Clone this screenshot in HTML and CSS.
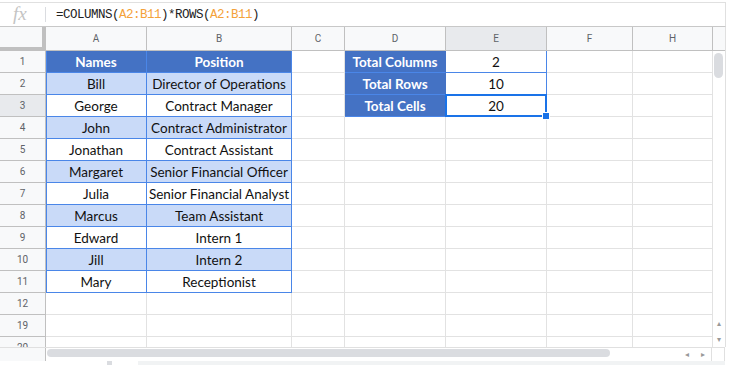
FILE: index.html
```html
<!DOCTYPE html>
<html lang="en">

<head>
    <meta charset="UTF-8">
    <meta name="viewport" content="width=device-width, initial-scale=1.0">
    <title>COLUMNS * ROWS</title>
    <link rel="stylesheet" href="styles.css">
</head>

<body>

    <!-- Formula bar -->
    <div class="formula-bar">
        <span class="fx">fx</span>
        <span class="fx-divider"></span>
        <span class="formula">=COLUMNS(<span class="range">A2:B11</span>)*ROWS(<span class="range">A2:B11</span>)</span>
    </div>

    <div class="sheet">
        <div class="grid">
            <!-- Column headers -->
            <div class="corner"></div>
            <div class="col-head">A</div>
            <div class="col-head">B</div>
            <div class="col-head">C</div>
            <div class="col-head">D</div>
            <div class="col-head selected">E</div>
            <div class="col-head">F</div>
            <div class="col-head">H</div>

            <!-- Row 1 -->
            <div class="row-head">1</div>
            <div class="cell t-head t-first">Names</div>
            <div class="cell t-head">Position</div>
            <div class="cell"></div>
            <div class="cell t-label">Total Columns</div>
            <div class="cell t-value">2</div>
            <div class="cell"></div>
            <div class="cell"></div>

            <!-- Row 2 -->
            <div class="row-head">2</div>
            <div class="cell t-body t-first shade">Bill</div>
            <div class="cell t-body shade">Director of Operations</div>
            <div class="cell"></div>
            <div class="cell t-label">Total Rows</div>
            <div class="cell t-value">10</div>
            <div class="cell"></div>
            <div class="cell"></div>

            <!-- Row 3 -->
            <div class="row-head selected">3</div>
            <div class="cell t-body t-first">George</div>
            <div class="cell t-body">Contract Manager</div>
            <div class="cell"></div>
            <div class="cell t-label">Total Cells</div>
            <div class="cell t-value active">20<span class="selection"></span><span class="handle"></span></div>
            <div class="cell"></div>
            <div class="cell"></div>

            <!-- Row 4 -->
            <div class="row-head">4</div>
            <div class="cell t-body t-first shade">John</div>
            <div class="cell t-body shade">Contract Administrator</div>
            <div class="cell"></div>
            <div class="cell"></div>
            <div class="cell"></div>
            <div class="cell"></div>
            <div class="cell"></div>

            <!-- Row 5 -->
            <div class="row-head">5</div>
            <div class="cell t-body t-first">Jonathan</div>
            <div class="cell t-body">Contract Assistant</div>
            <div class="cell"></div>
            <div class="cell"></div>
            <div class="cell"></div>
            <div class="cell"></div>
            <div class="cell"></div>

            <!-- Row 6 -->
            <div class="row-head">6</div>
            <div class="cell t-body t-first shade">Margaret</div>
            <div class="cell t-body shade">Senior Financial Officer</div>
            <div class="cell"></div>
            <div class="cell"></div>
            <div class="cell"></div>
            <div class="cell"></div>
            <div class="cell"></div>

            <!-- Row 7 -->
            <div class="row-head">7</div>
            <div class="cell t-body t-first">Julia</div>
            <div class="cell t-body">Senior Financial Analyst</div>
            <div class="cell"></div>
            <div class="cell"></div>
            <div class="cell"></div>
            <div class="cell"></div>
            <div class="cell"></div>

            <!-- Row 8 -->
            <div class="row-head">8</div>
            <div class="cell t-body t-first shade">Marcus</div>
            <div class="cell t-body shade">Team Assistant</div>
            <div class="cell"></div>
            <div class="cell"></div>
            <div class="cell"></div>
            <div class="cell"></div>
            <div class="cell"></div>

            <!-- Row 9 -->
            <div class="row-head">9</div>
            <div class="cell t-body t-first">Edward</div>
            <div class="cell t-body">Intern 1</div>
            <div class="cell"></div>
            <div class="cell"></div>
            <div class="cell"></div>
            <div class="cell"></div>
            <div class="cell"></div>

            <!-- Row 10 -->
            <div class="row-head">10</div>
            <div class="cell t-body t-first shade">Jill</div>
            <div class="cell t-body shade">Intern 2</div>
            <div class="cell"></div>
            <div class="cell"></div>
            <div class="cell"></div>
            <div class="cell"></div>
            <div class="cell"></div>

            <!-- Row 11 -->
            <div class="row-head">11</div>
            <div class="cell t-body t-first">Mary</div>
            <div class="cell t-body">Receptionist</div>
            <div class="cell"></div>
            <div class="cell"></div>
            <div class="cell"></div>
            <div class="cell"></div>
            <div class="cell"></div>

            <!-- Row 12 -->
            <div class="row-head">12</div>
            <div class="cell"></div>
            <div class="cell"></div>
            <div class="cell"></div>
            <div class="cell"></div>
            <div class="cell"></div>
            <div class="cell"></div>
            <div class="cell"></div>

            <!-- Row 19 -->
            <div class="row-head">19</div>
            <div class="cell"></div>
            <div class="cell"></div>
            <div class="cell"></div>
            <div class="cell"></div>
            <div class="cell"></div>
            <div class="cell"></div>
            <div class="cell"></div>

            <!-- Row 20 (cut off) -->
            <div class="row-head">20</div>
            <div class="cell"></div>
            <div class="cell"></div>
            <div class="cell"></div>
            <div class="cell"></div>
            <div class="cell"></div>
            <div class="cell"></div>
            <div class="cell"></div>
        </div>

        <!-- Vertical scrollbar -->
        <div class="v-scroll">
            <div class="v-corner"></div>
            <div class="v-track">
                <div class="v-thumb"></div>
            </div>
            <div class="v-arrows">
                <span class="arrow">&#9652;</span>
                <span class="arrow">&#9662;</span>
            </div>
        </div>
    </div>

    <!-- Horizontal scrollbar -->
    <div class="h-scroll">
        <div class="h-corner"></div>
        <div class="h-track">
            <div class="h-thumb"></div>
        </div>
        <div class="h-arrows">
            <span class="arrow">&#9666;</span>
            <span class="arrow">&#9656;</span>
        </div>
        <div class="h-end"></div>
    </div>

    <div class="tab-strip">
        <span class="tab-mark"></span>
        <span class="tab-fill"></span>
    </div>

</body>

</html>
```

FILE: styles.css
```css
body {
    margin: 0;
    width: 732px;
    height: 365px;
    overflow: hidden;
    background-color: #fff;
    font-family: Lato, "Open Sans", sans-serif;
}

/* Formula bar */
.formula-bar {
    display: flex;
    align-items: center;
    width: 725px;
    height: 23px;
    margin-top: 2px;
    border-top: 1px solid #e0e0e0;
    border-bottom: 1px solid #c8c8c8;
    border-right: 1px solid #e0e0e0;
    box-sizing: content-box;
}

.fx {
    width: 30px;
    padding-left: 13px;
    font-family: "Liberation Serif", serif;
    font-style: italic;
    font-size: 19px;
    color: #c4c4c4;
    line-height: 1;
    margin-top: -3px;
}

.fx-divider {
    width: 1px;
    height: 15px;
    background-color: #dadce0;
    margin-left: 2px;
}

.formula {
    margin-left: 10px;
    font-family: "Liberation Mono", monospace;
    font-size: 12.5px;
    letter-spacing: -0.5px;
    color: #222;
}

.formula .range {
    color: #f4a23a;
}

/* Sheet area */
.sheet {
    display: flex;
    height: 320px;
}

.grid {
    display: grid;
    grid-template-columns: 46px 101px 145px 53px 101px 101px 86px 80px;
    grid-template-rows: 24px repeat(14, 22px);
    width: 713px;
    height: 320px;
    overflow: hidden;
}

.grid > div {
    box-sizing: border-box;
    display: flex;
    align-items: center;
    justify-content: center;
}

.corner {
    background-color: #f8f9fa;
    border-right: 4px solid #c0c0c0;
    border-bottom: 4px solid #c0c0c0;
}

.col-head {
    background-color: #f8f9fa;
    border-right: 1px solid #c0c0c0;
    border-bottom: 1px solid #c0c0c0;
    font-family: Roboto, Arial, sans-serif;
    font-size: 10px;
    color: #5f6368;
}

.row-head {
    background-color: #f8f9fa;
    border-right: 1px solid #c0c0c0;
    border-bottom: 1px solid #c0c0c0;
    font-family: Roboto, Arial, sans-serif;
    font-size: 10px;
    color: #5f6368;
}

.col-head.selected,
.row-head.selected {
    background-color: #e8eaed;
}

.cell {
    border-right: 1px solid #e2e2e2;
    border-bottom: 1px solid #e2e2e2;
    font-size: 13.5px;
    color: #111;
    white-space: nowrap;
}

/* Names / Position table */
.t-head,
.t-body {
    border-right-color: #4a86e8;
    border-bottom-color: #4a86e8;
}

.t-first {
    box-shadow: inset 1px 0 0 #4a86e8;
}

.t-head {
    background-color: #4472c4;
    color: #fff;
    font-weight: bold;
}

.shade {
    background-color: #c9daf8;
}

/* Totals table */
.t-label {
    background-color: #4472c4;
    border-right-color: #4472c4;
    border-bottom-color: #4a86e8;
    color: #fff;
    font-weight: bold;
}

.t-value {
    border-right-color: #4a86e8;
    border-bottom-color: #4a86e8;
}

.active {
    position: relative;
}

.selection {
    position: absolute;
    top: -1px;
    left: -1px;
    right: -1px;
    bottom: -1px;
    border: 2px solid #1a73e8;
}

.handle {
    position: absolute;
    right: -4px;
    bottom: -4px;
    width: 6px;
    height: 6px;
    background-color: #1a73e8;
    border: 1px solid #fff;
}

/* Vertical scrollbar */
.v-scroll {
    display: flex;
    flex-direction: column;
    width: 12px;
    border-right: 1px solid #e0e0e0;
}

.v-corner {
    height: 23px;
    background-color: #f8f9fa;
    border-bottom: 1px solid #c0c0c0;
}

.v-track {
    flex: 1;
    padding: 2px 1px 0 1px;
}

.v-thumb {
    width: 9px;
    height: 25px;
    border-radius: 5px;
    background-color: #dadce0;
}

.v-arrows {
    display: flex;
    flex-direction: column;
    height: 31px;
}

.arrow {
    display: flex;
    align-items: center;
    justify-content: center;
    flex: 1;
    font-size: 8px;
    color: #999;
    font-family: "DejaVu Sans", sans-serif;
}

/* Horizontal scrollbar */
.h-scroll {
    display: flex;
    height: 13px;
    width: 725px;
    border-top: 1px solid #e0e0e0;
}

.h-corner {
    width: 45px;
    background-color: #f8f9fa;
    border-right: 1px solid #c0c0c0;
}

.h-track {
    flex: 1;
    padding: 1px 0 0 1px;
}

.h-thumb {
    width: 563px;
    height: 8px;
    border-radius: 5px;
    background-color: #dadce0;
}

.h-arrows {
    display: flex;
    width: 32px;
}

.h-end {
    width: 12px;
    border-left: 1px solid #e0e0e0;
    border-right: 1px solid #e0e0e0;
}

.tab-strip {
    display: flex;
    height: 5px;
    width: 725px;
}

.tab-mark {
    width: 5px;
    margin-left: 107px;
    background-color: #dadce0;
}

.tab-fill {
    flex: 1;
    margin-left: 26px;
    background-color: #f1f3f4;
}
```
